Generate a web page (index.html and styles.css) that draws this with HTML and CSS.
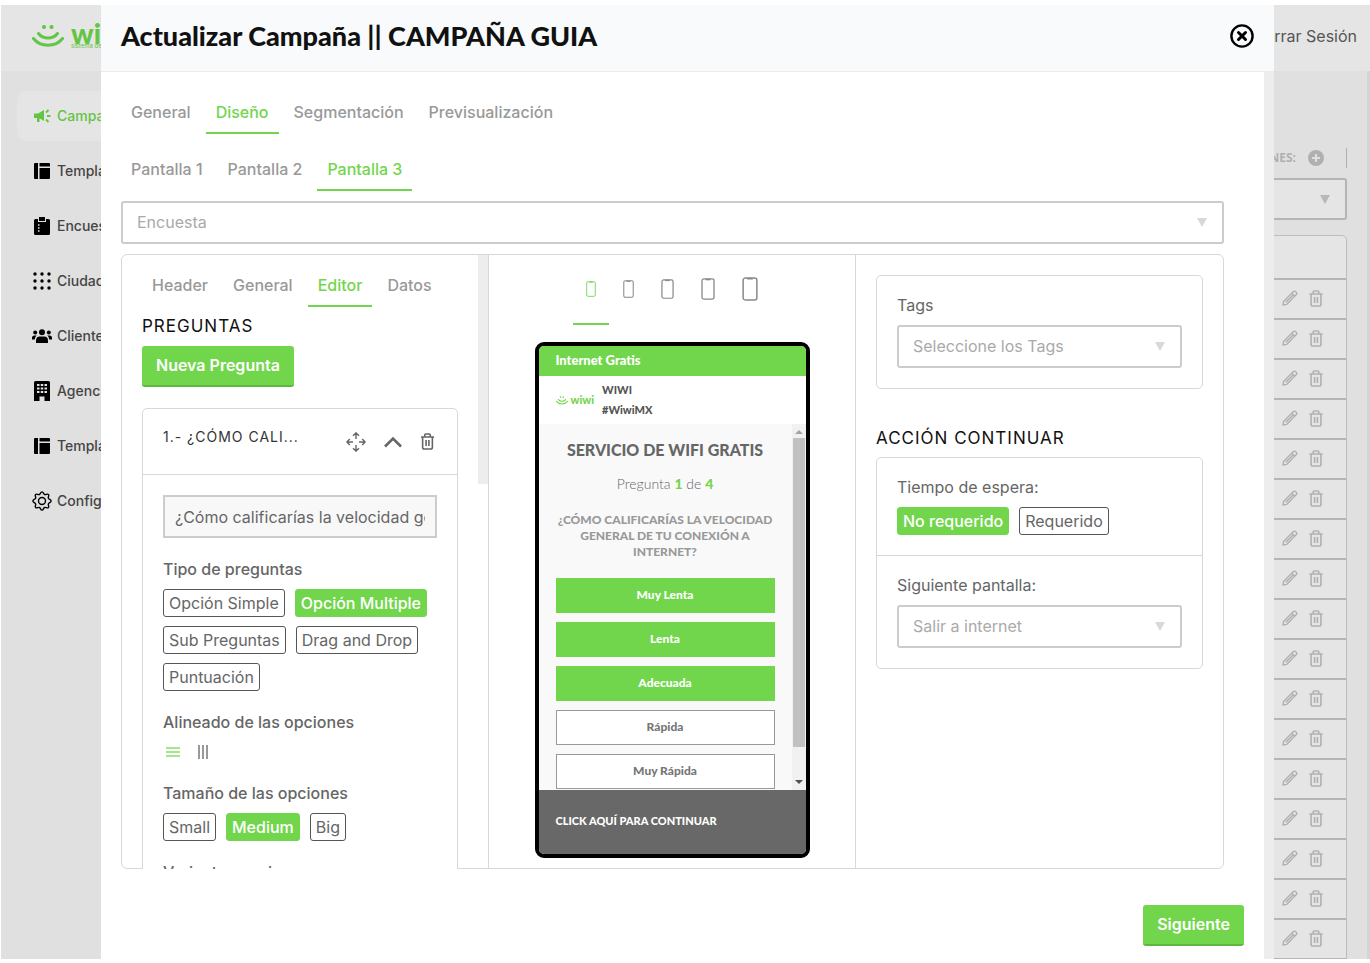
FILE: index.html
```html
<!DOCTYPE html>
<html lang="es">
<head>
  <meta charset="UTF-8" />
  <meta name="viewport" content="width=device-width, initial-scale=1.0"/>
  <title>Actualizar Campaña</title>
  <link rel="stylesheet" href="styles.css">
</head>
<body>
  <!-- Icons -->
  <svg class="sprite" width="0" height="0" aria-hidden="true">
    <symbol id="i-smile" viewBox="0 0 32 24">
      <circle cx="12" cy="3" r="2.1"/><circle cx="19.500" cy="3" r="2.100"/>
      <path d="M6.500 9.500c4.500 6 14.500 6 19 0M1.500 14.500c7 9 22 9 29 0" fill="none" stroke="currentColor" stroke-width="3" stroke-linecap="round"/>
    </symbol>
    <symbol id="i-horn" viewBox="0 0 18 16">
      <path d="M1 5.500h4L11 2v11L6.500 10.200V14H4v-4H1z"/>
      <path d="M13 4.500l2.500-2.500M14 8h3.500M13 11.500l2.500 2.500" fill="none" stroke="currentColor" stroke-width="1.800"/>
    </symbol>
    <symbol id="i-template" viewBox="0 0 16 16">
      <path d="M1 0h3v16H1a1 1 0 0 1-1-1V1a1 1 0 0 1 1-1zM5.500 0H15a1 1 0 0 1 1 1v2.500H5.500zM5.500 5H16v10a1 1 0 0 1-1 1H5.500z"/>
    </symbol>
    <symbol id="i-clipboard" viewBox="0 0 16 18">
      <path d="M1.500 2H4v3h8V2h2.500A1.500 1.500 0 0 1 16 3.500v13a1.500 1.500 0 0 1-1.500 1.500h-13A1.500 1.500 0 0 1 0 16.500v-13A1.500 1.500 0 0 1 1.500 2zM5 0h6v4H5z"/>
      <path d="M4 8h1.500M4 11h1.500M4 14h1.500" stroke="#e0e0e0" stroke-width="1.500"/>
    </symbol>
    <symbol id="i-dots" viewBox="0 0 18 18">
      <g id="dotrow"><circle cx="2" cy="2" r="1.700"/><circle cx="9" cy="2" r="1.700"/><circle cx="16" cy="2" r="1.700"/></g>
      <use href="#dotrow" y="7"/><use href="#dotrow" y="14"/>
    </symbol>
    <symbol id="i-users" viewBox="0 0 20 14">
      <circle cx="10" cy="3.200" r="3"/><circle cx="3.200" cy="3.600" r="2"/><circle cx="16.800" cy="3.600" r="2"/>
      <path d="M4 14v-2.500C4 9 5.500 7.500 7.500 7.500h5c2 0 3.500 1.500 3.500 4V14zM0 10.500V8.700C0 7.500 1 6.500 2.200 6.500h2.600C3.500 7.500 3 8.800 2.800 10.500zM20 10.500V8.700c0-1.200-1-2.200-2.200-2.200h-2.600c1.300 1 1.800 2.300 2 4z"/>
    </symbol>
    <symbol id="i-building" viewBox="0 0 16 20">
      <path d="M1.500 0h13A1.500 1.500 0 0 1 16 1.500V20h-5.500v-4.500h-5V20H0V1.500A1.500 1.500 0 0 1 1.500 0z"/>
      <path d="M3 4h10M3 7.500h10M3 11h10" stroke="#e0e0e0" stroke-width="2" stroke-dasharray="2.500 1.250"/>
    </symbol>
    <symbol id="i-gear" viewBox="0 0 20 20">
      <g fill="none" stroke="currentColor" stroke-width="1.400" stroke-linejoin="round">
        <path d="M10 .9c1.500 0 1.300 2.100 2.600 2.600 1.300.6 2.700-1.100 3.800 0s-.6 2.500 0 3.800c.5 1.300 2.700 1.200 2.700 2.700s-2.200 1.400-2.700 2.700c-.6 1.300 1.100 2.700 0 3.800s-2.500-.6-3.800 0c-1.300.5-1.100 2.600-2.600 2.600s-1.300-2.100-2.600-2.600c-1.300-.6-2.700 1.100-3.800 0s.6-2.500 0-3.800C3.100 11.400.9 11.500.9 10s2.200-1.400 2.700-2.700c.6-1.300-1.100-2.700 0-3.800s2.500.6 3.800 0C8.700 3 8.500.9 10 .9z"/>
        <circle cx="10" cy="10" r="3.500"/>
      </g>
    </symbol>
    <symbol id="i-pencil" viewBox="0 0 16 16">
      <path d="M1 15l.6-3.600L11.400 1.600a1.400 1.400 0 0 1 2 0l1 1a1.400 1.400 0 0 1 0 2L4.600 14.400zM9.800 3.200l3 3M3.800 12.200l7-7" fill="none" stroke="currentColor" stroke-width="1.400" stroke-linejoin="round"/>
    </symbol>
    <symbol id="i-trash" viewBox="0 0 16 18">
      <path d="M1 4.200h14M5 4V2.300C5 1.500 5.500 1 6.300 1h3.400c.8 0 1.300.5 1.300 1.300V4M2.800 4.500V15c0 1.200.7 2 1.900 2h6.600c1.200 0 1.900-.8 1.900-2V4.500M6.500 7.500v6.200M9.500 7.500v6.200" fill="none" stroke="currentColor" stroke-width="1.700"/>
    </symbol>
    <symbol id="i-plus" viewBox="0 0 16 16">
      <circle cx="8" cy="8" r="8"/><path d="M8 4v8M4 8h8" stroke="#e0e0e0" stroke-width="2"/>
    </symbol>
    <symbol id="i-close" viewBox="0 0 24 24">
      <g fill="none" stroke="currentColor" stroke-linecap="round"><circle cx="12" cy="12" r="10.600" stroke-width="2.400"/><path d="M8.500 8.500l7 7M15.500 8.500l-7 7" stroke-width="3"/></g>
    </symbol>
    <symbol id="i-move" viewBox="0 0 20 20">
      <path d="M10 7V1M7 3.800L10 .9l3 2.900M10 13v6M7 16.200l3 2.900 3-2.900M7 10H1M3.800 7L.9 10l2.900 3M13 10h6M16.200 7l2.900 3-2.900 3" fill="none" stroke="currentColor" stroke-width="1.400"/>
    </symbol>
    <symbol id="i-up" viewBox="0 0 18 12">
      <path d="M1 10.500l8-8 8 8" fill="none" stroke="currentColor" stroke-width="2.600"/>
    </symbol>
    <symbol id="i-phone" viewBox="0 0 14 24" preserveAspectRatio="none">
      <rect x="1" y="1" width="12" height="22" rx="2" fill="none" stroke="currentColor" stroke-width="1.300"/>
      <path d="M4.500 1h5v1.500h-5z"/>
    </symbol>
  </svg>

  <div class="screen">
    <!-- Page behind the modal -->
    <header class="topbar">
      <div class="logo">
        <svg class="logo-smile"><use href="#i-smile"/></svg>
        <div class="logo-text"><b>wiwi</b><small>sistema de</small></div>
      </div>
      <a href="#" class="logout">Cerrar Sesión</a>
    </header>
    <div class="page">
      <nav class="sidebar">
        <a href="#" class="active"><svg width="18" height="16"><use href="#i-horn"/></svg>Campañas</a>
        <a href="#"><svg width="16" height="16"><use href="#i-template"/></svg>Templates</a>
        <a href="#"><svg width="16" height="18"><use href="#i-clipboard"/></svg>Encuestas</a>
        <a href="#"><svg width="18" height="18"><use href="#i-dots"/></svg>Ciudades</a>
        <a href="#"><svg width="20" height="14"><use href="#i-users"/></svg>Clientes</a>
        <a href="#"><svg width="16" height="20"><use href="#i-building"/></svg>Agencias</a>
        <a href="#"><svg width="16" height="16"><use href="#i-template"/></svg>Templates</a>
        <a href="#"><svg width="20" height="20"><use href="#i-gear"/></svg>Configuración</a>
      </nav>
      <main class="listing">
        <div class="actions">
          <span>ACCIONES:</span>
          <button type="button" aria-label="Agregar"><svg width="16" height="16"><use href="#i-plus"/></svg></button>
        </div>
        <div class="select-box">
          <select aria-label="Filtro"><option></option></select>
        </div>
        <table>
          <thead><tr><th></th></tr></thead>
          <tbody id="rows"></tbody>
        </table>
      </main>
    </div>

    <!-- Modal -->
    <section class="modal" role="dialog" aria-labelledby="modalTitle">
      <header class="modal-header">
        <h1 id="modalTitle">Actualizar Campaña || CAMPAÑA GUIA</h1>
        <button type="button" class="close" aria-label="Cerrar"><svg width="24" height="24"><use href="#i-close"/></svg></button>
      </header>

      <div class="modal-body">
        <div class="modal-content">
          <nav class="tabs">
            <button type="button">General</button>
            <button type="button" class="active">Diseño</button>
            <button type="button">Segmentación</button>
            <button type="button">Previsualización</button>
          </nav>
          <nav class="tabs">
            <button type="button">Pantalla 1</button>
            <button type="button">Pantalla 2</button>
            <button type="button" class="active">Pantalla 3</button>
          </nav>
          <div class="select-box">
            <select aria-label="Tipo de pantalla"><option>Encuesta</option></select>
          </div>

          <div class="panel">
            <!-- Editor -->
            <div class="editor">
              <div class="editor-content">
                <nav class="tabs">
                  <button type="button">Header</button>
                  <button type="button">General</button>
                  <button type="button" class="active">Editor</button>
                  <button type="button">Datos</button>
                </nav>
                <h2>PREGUNTAS</h2>
                <button type="button" class="btn">Nueva Pregunta</button>

                <div class="card question">
                  <div class="question-header">
                    <h3>1.- ¿CÓMO CALI...</h3>
                    <button type="button" aria-label="Mover"><svg width="20" height="20"><use href="#i-move"/></svg></button>
                    <button type="button" aria-label="Contraer"><svg width="18" height="12"><use href="#i-up"/></svg></button>
                    <button type="button" aria-label="Eliminar"><svg width="15" height="17"><use href="#i-trash"/></svg></button>
                  </div>
                  <div class="question-body">
                    <input type="text" aria-label="Pregunta" value="¿Cómo calificarías la velocidad general de tu conexión a internet?">
                    <h4>Tipo de preguntas</h4>
                    <div class="chips">
                      <button type="button">Opción Simple</button>
                      <button type="button" class="active">Opción Multiple</button>
                      <button type="button">Sub Preguntas</button>
                      <button type="button">Drag and Drop</button>
                      <button type="button">Puntuación</button>
                    </div>
                    <h4>Alineado de las opciones</h4>
                    <div class="align">
                      <button type="button" class="active" aria-label="Vertical"><svg width="14" height="14"><path d="M0 3h14M0 7h14M0 11h14" stroke="currentColor" stroke-width="2"/></svg></button>
                      <button type="button" aria-label="Horizontal"><svg width="14" height="14"><path d="M3 0v14M7 0v14M11 0v14" stroke="currentColor" stroke-width="2"/></svg></button>
                    </div>
                    <h4>Tamaño de las opciones</h4>
                    <div class="chips">
                      <button type="button">Small</button>
                      <button type="button" class="active">Medium</button>
                      <button type="button">Big</button>
                    </div>
                    <h4>Variantes opciones</h4>
                  </div>
                </div>
              </div>
              <div class="thumb"></div>
            </div>

            <!-- Phone preview -->
            <div class="preview">
              <nav class="sizes">
                <button type="button" class="active" aria-label="Tamaño 1"><svg width="10" height="16"><use href="#i-phone"/></svg></button>
                <button type="button" aria-label="Tamaño 2"><svg width="11" height="18"><use href="#i-phone"/></svg></button>
                <button type="button" aria-label="Tamaño 3"><svg width="13" height="20"><use href="#i-phone"/></svg></button>
                <button type="button" aria-label="Tamaño 4"><svg width="14" height="22"><use href="#i-phone"/></svg></button>
                <button type="button" aria-label="Tamaño 5"><svg width="16" height="24"><use href="#i-phone"/></svg></button>
              </nav>
              <div class="phone">
                <div class="phone-title">Internet Gratis</div>
                <div class="phone-brand">
                  <div class="logo small">
                    <svg class="logo-smile"><use href="#i-smile"/></svg>
                    <div class="logo-text"><b>wiwi</b></div>
                  </div>
                  <p>WIWI<br>#WiwiMX</p>
                </div>
                <div class="phone-body">
                  <div class="survey">
                    <h5>SERVICIO DE WIFI GRATIS</h5>
                    <p class="count">Pregunta <b>1</b> de <b>4</b></p>
                    <p class="ask">¿CÓMO CALIFICARÍAS LA VELOCIDAD GENERAL DE TU CONEXIÓN A INTERNET?</p>
                    <div class="options">
                      <button type="button" class="active">Muy Lenta</button>
                      <button type="button" class="active">Lenta</button>
                      <button type="button" class="active">Adecuada</button>
                      <button type="button">Rápida</button>
                      <button type="button">Muy Rápida</button>
                    </div>
                  </div>
                  <div class="scrollbar">
                    <svg width="8" height="4"><path d="M4 0l4 4H0z" fill="#a3a3a3"/></svg>
                    <div class="bar"></div>
                    <svg width="8" height="4"><path d="M0 0h8L4 4z" fill="#505050"/></svg>
                  </div>
                </div>
                <button type="button" class="phone-footer">CLICK AQUÍ PARA CONTINUAR</button>
              </div>
            </div>

            <!-- Settings -->
            <div class="settings">
              <div class="card">
                <div class="field">
                  <label for="tags">Tags</label>
                  <div class="select-box">
                    <select id="tags"><option>Seleccione los Tags</option></select>
                  </div>
                </div>
              </div>
              <h2>ACCIÓN CONTINUAR</h2>
              <div class="card">
                <div class="field">
                  <span class="label">Tiempo de espera:</span>
                  <div class="chips">
                    <button type="button" class="active">No requerido</button>
                    <button type="button">Requerido</button>
                  </div>
                </div>
                <div class="field">
                  <label for="next">Siguiente pantalla:</label>
                  <div class="select-box">
                    <select id="next"><option>Salir a internet</option></select>
                  </div>
                </div>
              </div>
            </div>
          </div>

          <footer class="modal-footer">
            <button type="button" class="btn">Siguiente</button>
          </footer>
        </div>
        <div class="gutter"></div>
      </div>
    </section>
  </div>

  <script>
    const rows = document.getElementById('rows');

    for (let i = 0; i < 17; i++) {
      rows.insertAdjacentHTML('beforeend', `
        <tr><td><div class="row-actions">
          <button type="button" aria-label="Editar"><svg width="16" height="16"><use href="#i-pencil"/></svg></button>
          <button type="button" aria-label="Eliminar"><svg width="16" height="17"><use href="#i-trash"/></svg></button>
        </div></td></tr>`);
    }
  </script>
</body>
</html>
```
FILE: styles.css
```css
* {
  box-sizing: border-box;
}

body {
  margin: 0;
  padding: 5px 0 4px 1px;
  background: #fff;
  font-family: Inter, 'Liberation Sans', sans-serif;
  font-size: 16px;
  line-height: 20px;
  color: #666;
}

h1, h2, h3, h4, h5, p {
  margin: 0;
}

a {
  color: inherit;
  text-decoration: none;
}

button {
  padding: 0;
  background: none;
  border: none;
  color: inherit;
  font: inherit;
  cursor: pointer;
}

svg {
  display: block;
  fill: currentColor;
}

.sprite {
  position: absolute;
}

.screen {
  position: relative;
  display: flex;
  flex-direction: column;
  height: calc(100vh - 9px);
  background: #e0e0e0;
  overflow: hidden;
}

/* Page behind the modal */
.topbar {
  display: flex;
  flex: none;
  justify-content: space-between;
  align-items: center;
  height: 66px;
  padding: 0 13px 5px 31px;
  background: #e5e5e5;
}

.logo {
  display: flex;
  align-items: center;
  gap: 7px;
  color: #64c443;
}

.logo-smile {
  width: 32px;
  height: 24px;
}

.logo-text b {
  display: block;
  font-family: Lato, sans-serif;
  font-size: 28px;
  font-weight: 900;
  line-height: 20px;
}

.logo-text small {
  display: block;
  font-size: 6px;
  line-height: 6px;
}

.logout {
  color: #555;
}

.page {
  display: flex;
  flex: 1;
  min-height: 0;
  justify-content: space-between;
  border-right: 3px solid #d4d4d4;
}

.sidebar {
  display: flex;
  flex-direction: column;
  gap: 5px;
  width: 220px;
  padding: 20px 16px;
}

.sidebar a {
  display: grid;
  grid-template-columns: 20px 1fr;
  align-items: center;
  column-gap: 5px;
  height: 50px;
  padding-left: 15px;
  border-radius: 10px;
  font-size: 14px;
  font-weight: 500;
  color: #444;
}

.sidebar svg {
  justify-self: center;
  color: #000;
}

.sidebar .active {
  background: #e5e5e5;
}

.sidebar .active,
.sidebar .active svg {
  color: #64c443;
}

.listing {
  flex: 1;
  padding: 77px 20px 0 0;
  color: #b0b0b0;
}

.actions {
  display: flex;
  justify-content: flex-end;
  align-items: center;
  gap: 12px;
  height: 20px;
  padding-right: 22px;
  margin-bottom: 10px;
  border-right: 1px solid #b0b0b0;
  font-family: 'Noto Sans', sans-serif;
  font-size: 12px;
  font-weight: 700;
}

.listing .select-box {
  height: 42px;
  margin-bottom: 15px;
  background: #e5e5e5;
  border-color: #b5b5b5;
}

.listing .select-box::after {
  border-top-color: #b8b8b8;
}

.listing table {
  width: 100%;
  border: 1px solid #bdbdbd;
  border-radius: 5px 5px 0 0;
  border-spacing: 0;
  background: #e5e5e5;
}

.listing th,
.listing td {
  height: 40px;
  padding: 0 22px;
  border-bottom: 2px solid #b5b5b5;
}

.listing td {
  padding-bottom: 2px;
}

.listing th {
  height: 44px;
}

.row-actions {
  display: flex;
  justify-content: flex-end;
  gap: 10px;
}

/* Modal */
.modal {
  position: absolute;
  top: 0;
  bottom: 0;
  left: 100px;
  right: 96px;
  display: flex;
  flex-direction: column;
  background: #fff;
}

.modal-header {
  display: flex;
  flex: none;
  justify-content: space-between;
  align-items: center;
  height: 67px;
  padding: 0 20px 4px;
  background: #f8fafc;
  border-bottom: 1px solid #ececec;
}

.modal-header h1 {
  font-family: Lato, sans-serif;
  font-size: 27px;
  font-weight: 900;
  line-height: 36px;
  color: #111;
}

.close {
  color: #000;
}

.modal-body {
  display: flex;
  flex: 1;
  min-height: 0;
}

.modal-content {
  display: flex;
  flex-direction: column;
  flex: 1;
  min-width: 0;
  padding: 20px 40px 13px 20px;
}

.gutter {
  width: 10px;
  background: #ededed;
}

.tabs {
  display: flex;
  flex: none;
  gap: 5px;
  margin-bottom: 15px;
}

.tabs button {
  height: 42px;
  padding: 0 10px;
  border-bottom: 2px solid transparent;
  font-weight: 500;
  color: #999;
}

.tabs .active {
  border-color: #72d64c;
  color: #72d64c;
}

.tabs + .tabs {
  margin-bottom: 10px;
}

.select-box {
  display: grid;
  flex: none;
  align-items: center;
  height: 43px;
  border: 2px solid #ccc;
  border-radius: 3px;
}

.select-box select {
  grid-area: 1 / 1;
  width: 100%;
  height: 100%;
  padding: 0 40px 2px 14px;
  appearance: none;
  background: none;
  border: none;
  font: inherit;
  color: #aaa;
}

.select-box::after {
  content: "";
  grid-area: 1 / 1;
  justify-self: end;
  margin-right: 15px;
  border: 5px solid transparent;
  border-top: 9px solid #d8d8d8;
  border-bottom: 0;
  pointer-events: none;
}

.panel {
  display: grid;
  grid-template-columns: repeat(3, 1fr);
  flex: 1;
  min-height: 0;
  margin-top: 10px;
  border: 1px solid #d8d8d8;
  border-radius: 6px;
}

.panel h2 {
  font-size: 17px;
  font-weight: 400;
  line-height: 20px;
  letter-spacing: 1px;
  color: #111;
}

.btn {
  height: 41px;
  padding: 0 14px 2px;
  background: #72d64c;
  border-bottom: 2px solid #5fb740;
  border-radius: 3px;
  color: #fff;
  font-weight: 600;
}

.card {
  background: #fff;
  border: 1px solid #d8d8d8;
  border-radius: 5px;
}

.chips {
  display: flex;
  flex-wrap: wrap;
  gap: 9px 10px;
}

.chips button {
  height: 28px;
  padding: 0 5px;
  border: 1px solid #555;
  border-radius: 3px;
}

.chips .active {
  background: #72d64c;
  border-color: #72d64c;
  color: #fff;
  font-weight: 500;
}

/* Editor */
.editor {
  display: flex;
  min-width: 0;
  min-height: 0;
  margin-bottom: -1px;
  border-right: 1px solid #d8d8d8;
  overflow: hidden;
}

.editor-content {
  flex: 1;
  min-width: 0;
  padding: 10px 20px 0;
}

.editor .tabs {
  margin-bottom: 9px;
}

.editor h2 {
  margin-bottom: 10px;
}

.thumb {
  width: 10px;
  height: 229px;
  background: #ededed;
}

.question {
  margin-top: 21px;
}

.question-header {
  display: flex;
  align-items: center;
  gap: 18px;
  height: 66px;
  padding: 0 22px 0 20px;
  border-bottom: 1px solid #d8d8d8;
}

.question-header h3 {
  flex: 1;
  padding-bottom: 9px;
  font-size: 14px;
  font-weight: 400;
  letter-spacing: 1px;
  white-space: nowrap;
  color: #333;
}

.question-body {
  padding: 20px;
}

.question-body input {
  display: block;
  width: 100%;
  height: 43px;
  padding: 0 10px;
  background: #f8f8f8;
  border: 2px solid #ccc;
  font: inherit;
  color: #666;
}

.question-body h4 {
  margin: 21px 0 10px;
  font-size: 16px;
  font-weight: 500;
}

.align {
  display: flex;
  gap: 16px;
  height: 20px;
  padding-left: 3px;
  color: #999;
}

.align .active {
  color: #a5e58c;
}

/* Phone preview */
.preview {
  display: flex;
  flex-direction: column;
  align-items: center;
  border-right: 1px solid #d8d8d8;
  font-family: Lato, sans-serif;
}

.sizes {
  display: flex;
  gap: 1px;
  margin-bottom: 17px;
}

.sizes button {
  display: flex;
  justify-content: center;
  align-items: center;
  height: 70px;
  padding: 0 13px;
  border-bottom: 2px solid transparent;
  color: #888;
}

.sizes .active {
  border-color: #72d64c;
  color: #72d64c;
}

.phone {
  width: 275px;
  background: #fff;
  border: 4px solid #000;
  border-radius: 9px;
  overflow: hidden;
  font-size: 12px;
  font-weight: 900;
}

.phone-title {
  padding: 4px 17px 6px;
  background: #72d64c;
  color: #fff;
  font-size: 13px;
}

.phone-brand {
  display: flex;
  align-items: center;
  gap: 8px;
  height: 48px;
  padding: 0 17px;
  color: #555;
  font-size: 11px;
}

.logo.small {
  gap: 3px;
  color: #72d64c;
}

.small .logo-smile {
  width: 12px;
  height: 9px;
}

.small b {
  font-size: 11px;
  line-height: 14px;
}

.phone-body {
  display: flex;
  height: 366px;
  background: #f9f9f9;
  overflow: hidden;
}

.survey {
  flex: 1;
  min-width: 0;
  padding: 16px 17px 0;
  text-align: center;
}

.survey h5 {
  margin-bottom: 14px;
  font-size: 16px;
  font-weight: 900;
  white-space: nowrap;
  color: #666;
}

.count {
  margin-bottom: 18px;
  font-size: 14px;
  font-weight: 300;
}

.count b {
  color: #72d64c;
  font-weight: 900;
}

.ask {
  margin: 0 -4px 18px;
  font-size: 12px;
  line-height: 16px;
  color: #999;
}

.options {
  display: grid;
  gap: 9px;
}

.options button {
  height: 35px;
  padding-bottom: 2px;
  background: #fff;
  border: 1px solid #999;
  color: #777;
}

.options .active {
  background: #72d64c;
  border-color: #72d64c;
  color: #fff;
}

.scrollbar {
  display: flex;
  flex-direction: column;
  align-items: center;
  width: 14px;
  padding: 6px 1px;
  background: #f1f1f1;
}

.bar {
  width: 100%;
  height: 309px;
  margin: 4px 0 auto;
  background: #c1c1c1;
}

.phone-footer {
  display: block;
  width: 100%;
  height: 64px;
  padding: 0 17px 2px;
  background: #686868;
  color: #fff;
  font-size: 11px;
  text-align: left;
}

/* Settings */
.settings {
  padding: 20px;
}

.settings h2 {
  margin: 39px 0 9px;
}

.field {
  padding: 19px 20px 20px;
}

.field + .field {
  border-top: 1px solid #d8d8d8;
}

.field label,
.field .label {
  display: block;
  margin-bottom: 10px;
}

.modal-footer {
  display: flex;
  justify-content: flex-end;
  margin: 36px -20px 0 0;
}
```
